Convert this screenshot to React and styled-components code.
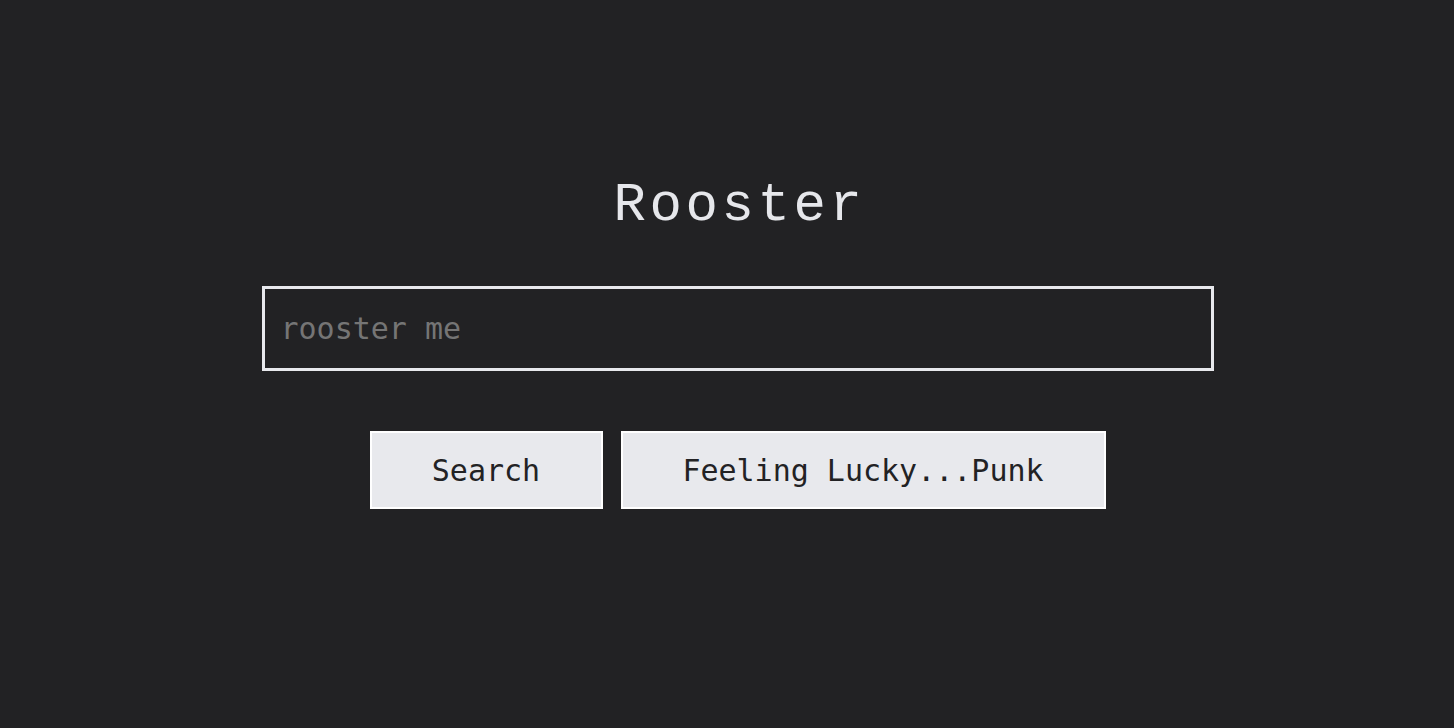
import React from 'react';
import styled, { createGlobalStyle } from 'styled-components';

const GlobalStyle = createGlobalStyle`
  html, body {
    margin: 0;
    padding: 0;
    background: #222224;
  }
`;

const Page = styled.div`
  min-height: 728px;
  display: flex;
  flex-direction: column;
  align-items: center;
  padding-top: 171px;
  padding-left: 21px;
  box-sizing: border-box;
  background: #222224;
`;

const Title = styled.h1`
  margin: 0 0 0 4px;
  font-family: "Liberation Mono", "Courier New", monospace;
  font-weight: 400;
  font-size: 54px;
  letter-spacing: 3.6px;
  line-height: 70px;
  color: #e6e7eb;
`;

const SearchInput = styled.input`
  margin-top: 45px;
  width: 952px;
  height: 85px;
  box-sizing: border-box;
  border: 3px solid #e8e9ed;
  background: #222224;
  padding: 0 16px;
  font-family: "DejaVu Sans Mono", monospace;
  font-size: 30px;
  color: #e8e9ed;
  outline: none;
  ::placeholder {
    color: #6b6b6d;
  }
`;

const ButtonRow = styled.div`
  margin-top: 60px;
  display: flex;
  gap: 18px;
`;

const Button = styled.button`
  width: ${(p) => p.w}px;
  height: 78px;
  box-sizing: border-box;
  border: 2px solid #ffffff;
  background: #e8e9ed;
  font-family: "DejaVu Sans Mono", monospace;
  font-size: 30px;
  color: #222224;
  cursor: pointer;
`;

const App = () => {
  return (
    <>
      <GlobalStyle />
      <Page>
        <Title>Rooster</Title>
        <SearchInput placeholder="rooster me" />
        <ButtonRow>
          <Button w={233}>Search</Button>
          <Button w={485}>Feeling Lucky...Punk</Button>
        </ButtonRow>
      </Page>
    </>
  );
};

export default App;
